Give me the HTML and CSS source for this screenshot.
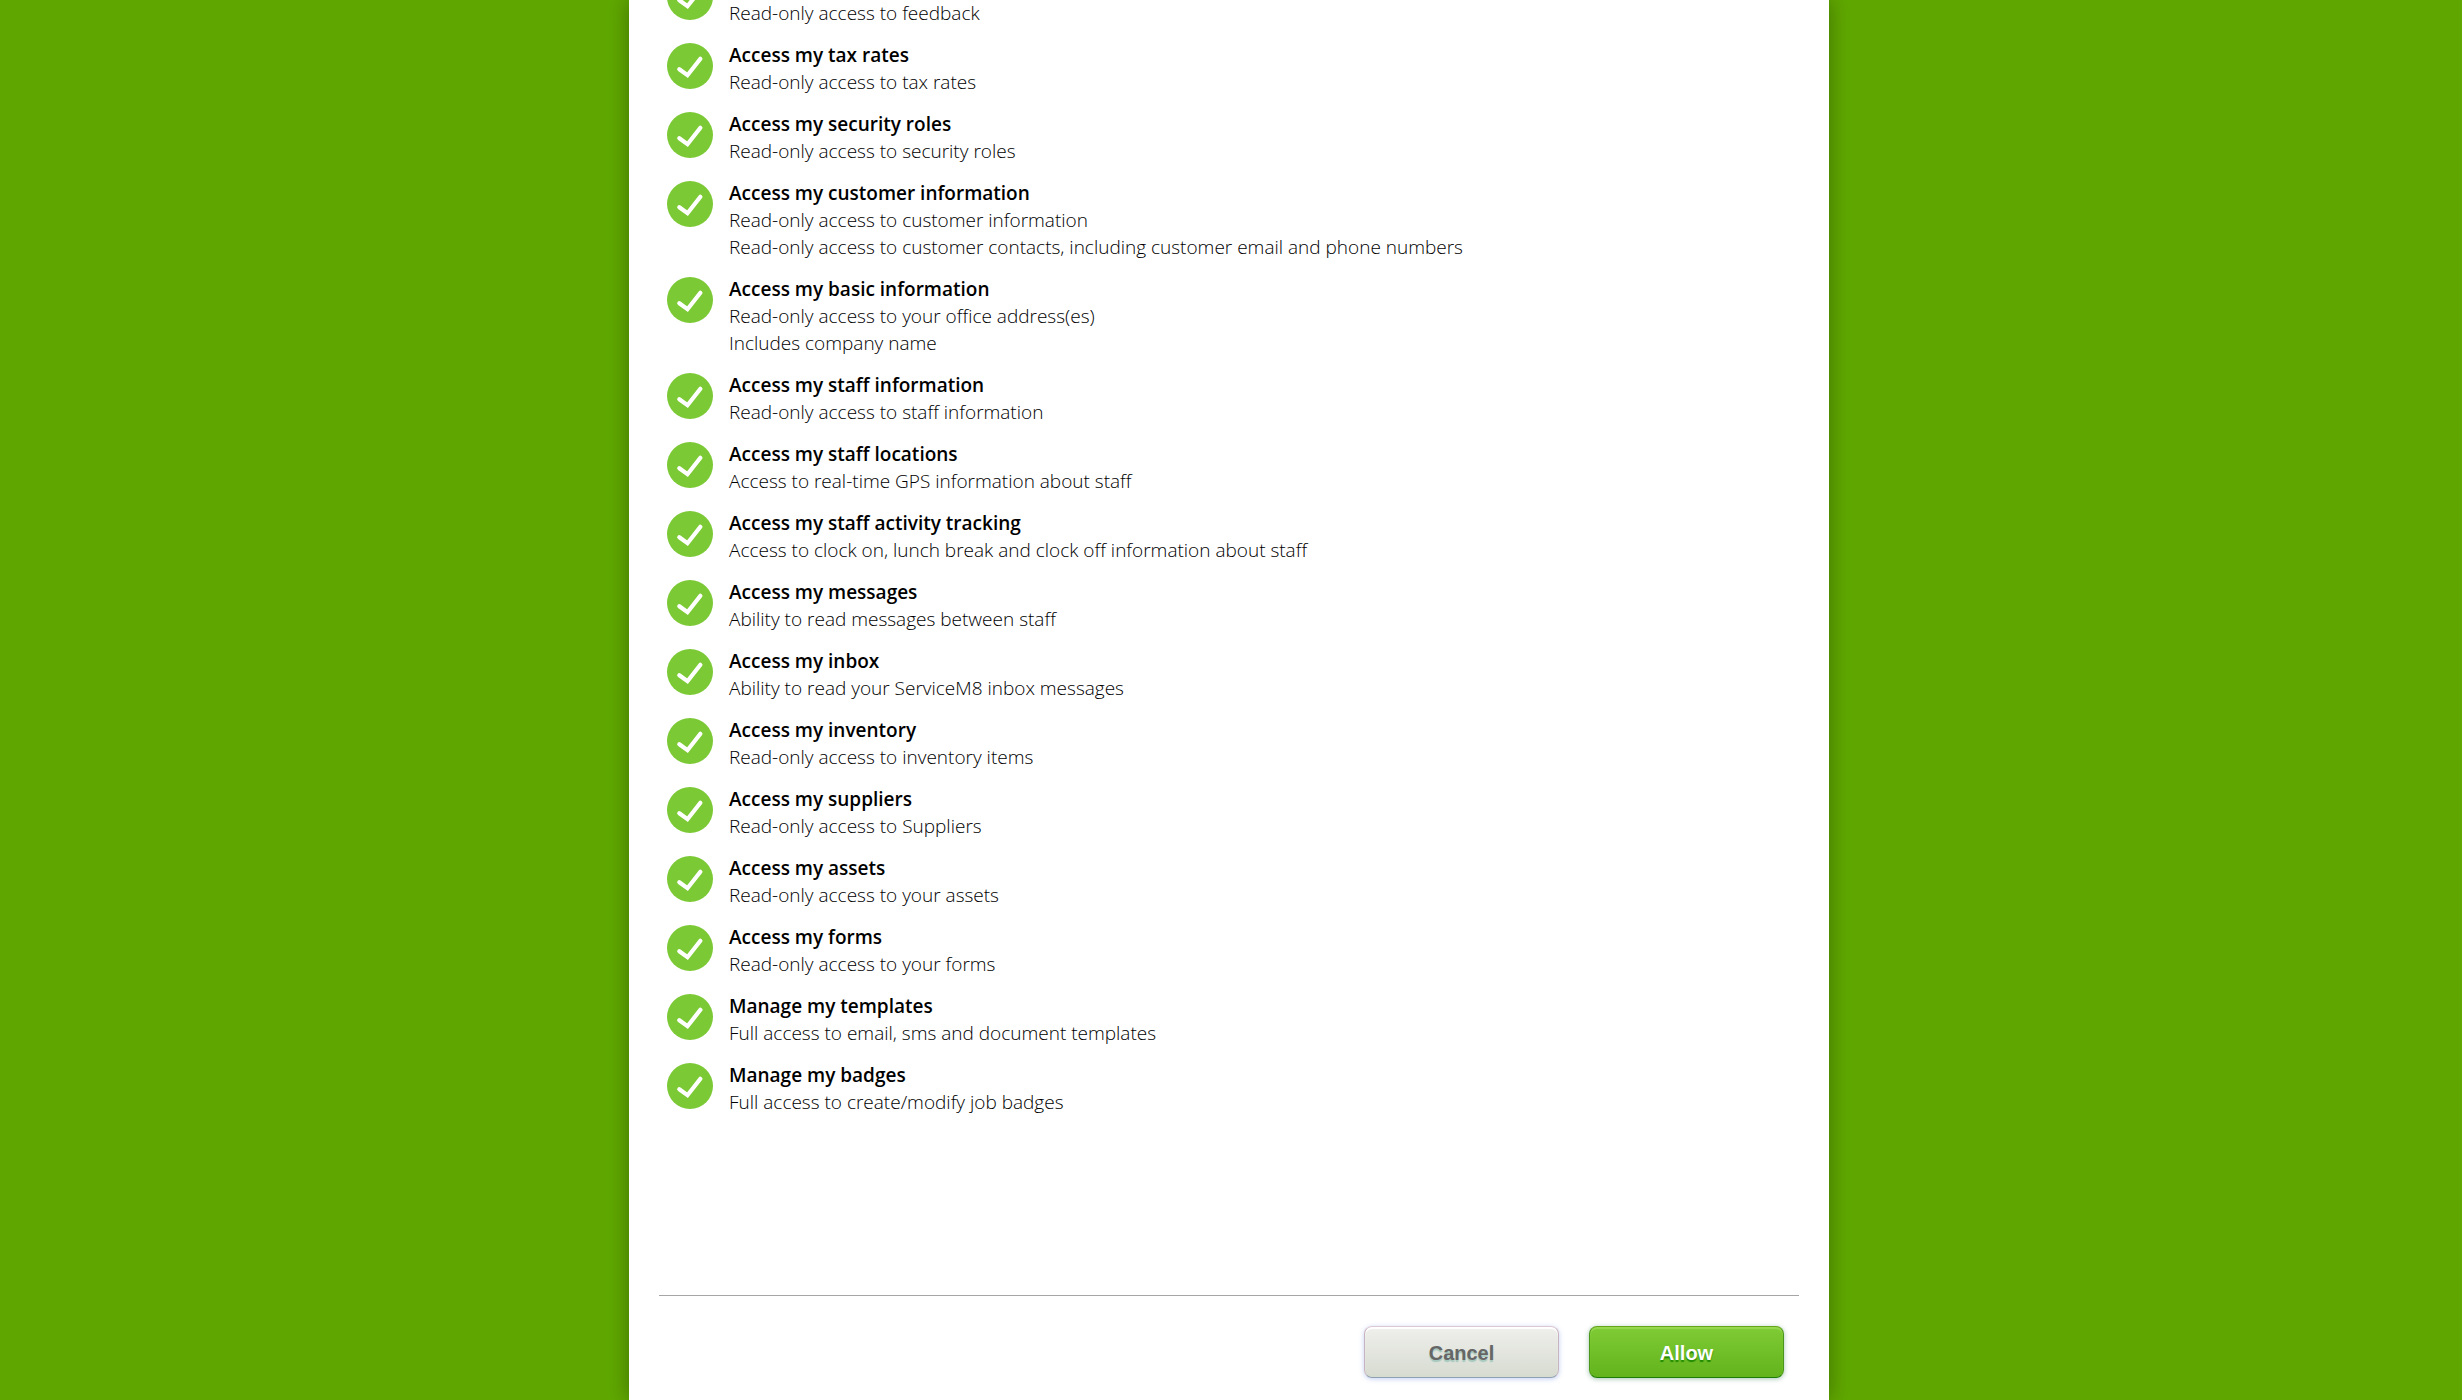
FILE: index.html
```html
<!DOCTYPE html>
<html lang="en">
<head>
<meta charset="utf-8">
<meta name="viewport" content="width=device-width, initial-scale=1">
<title>Authorise access</title>
<link rel="stylesheet" href="styles.css">
</head>
<body>
<svg class="sprite" aria-hidden="true">
  <symbol id="tick" viewBox="0 0 46 46">
    <circle cx="23" cy="23" r="23" fill="#7cc936"/>
    <path d="M12.300 26.200L20.500 32.200L33.400 15.800" fill="none" stroke="#fff" stroke-width="4.200" stroke-linecap="round" stroke-linejoin="miter"/>
  </symbol>
</svg>
<main class="panel">
  <ul class="scopes">
    <li class="scope scope-partial"><svg class="tick" aria-hidden="true"><use href="#tick"/></svg><div><p>Read-only access to feedback</p></div></li>
    <li class="scope"><svg class="tick" aria-hidden="true"><use href="#tick"/></svg><div><h2>Access my tax rates</h2><p>Read-only access to tax rates</p></div></li>
    <li class="scope"><svg class="tick" aria-hidden="true"><use href="#tick"/></svg><div><h2>Access my security roles</h2><p>Read-only access to security roles</p></div></li>
    <li class="scope"><svg class="tick" aria-hidden="true"><use href="#tick"/></svg><div><h2>Access my customer information</h2><p>Read-only access to customer information</p><p>Read-only access to customer contacts, including customer email and phone numbers</p></div></li>
    <li class="scope"><svg class="tick" aria-hidden="true"><use href="#tick"/></svg><div><h2>Access my basic information</h2><p>Read-only access to your office address(es)</p><p>Includes company name</p></div></li>
    <li class="scope"><svg class="tick" aria-hidden="true"><use href="#tick"/></svg><div><h2>Access my staff information</h2><p>Read-only access to staff information</p></div></li>
    <li class="scope"><svg class="tick" aria-hidden="true"><use href="#tick"/></svg><div><h2>Access my staff locations</h2><p>Access to real-time GPS information about staff</p></div></li>
    <li class="scope"><svg class="tick" aria-hidden="true"><use href="#tick"/></svg><div><h2>Access my staff activity tracking</h2><p>Access to clock on, lunch break and clock off information about staff</p></div></li>
    <li class="scope"><svg class="tick" aria-hidden="true"><use href="#tick"/></svg><div><h2>Access my messages</h2><p>Ability to read messages between staff</p></div></li>
    <li class="scope"><svg class="tick" aria-hidden="true"><use href="#tick"/></svg><div><h2>Access my inbox</h2><p>Ability to read your ServiceM8 inbox messages</p></div></li>
    <li class="scope"><svg class="tick" aria-hidden="true"><use href="#tick"/></svg><div><h2>Access my inventory</h2><p>Read-only access to inventory items</p></div></li>
    <li class="scope"><svg class="tick" aria-hidden="true"><use href="#tick"/></svg><div><h2>Access my suppliers</h2><p>Read-only access to Suppliers</p></div></li>
    <li class="scope"><svg class="tick" aria-hidden="true"><use href="#tick"/></svg><div><h2>Access my assets</h2><p>Read-only access to your assets</p></div></li>
    <li class="scope"><svg class="tick" aria-hidden="true"><use href="#tick"/></svg><div><h2>Access my forms</h2><p>Read-only access to your forms</p></div></li>
    <li class="scope"><svg class="tick" aria-hidden="true"><use href="#tick"/></svg><div><h2>Manage my templates</h2><p>Full access to email, sms and document templates</p></div></li>
    <li class="scope"><svg class="tick" aria-hidden="true"><use href="#tick"/></svg><div><h2>Manage my badges</h2><p>Full access to create/modify job badges</p></div></li>
  </ul>
  <form class="actions">
    <button class="btn btn-cancel" type="button">Cancel</button>
    <button class="btn btn-allow" type="submit">Allow</button>
  </form>
</main>
</body>
</html>
```
FILE: styles.css
```css
* { box-sizing: border-box; }

body {
  margin: 0;
  padding-right: 4px;
  min-height: 100vh;
  display: flex;
  justify-content: center;
  background: #5fa700;
  color: #000;
  font: 300 19px/27px "Open Sans", sans-serif;
  overflow-x: hidden;
}

.sprite { position: absolute; width: 0; height: 0; }

.panel {
  flex: 0 1 1200px;
  display: flex;
  flex-direction: column;
  padding: 0 30px 22px;
  background: #fff;
  box-shadow: 0 0 20px rgba(0, 0, 0, 0.32);
}

.scopes {
  list-style: none;
  margin: 0 0 30px;
  padding: 0 8px;
  display: grid;
  gap: 15px;
}

.scope { display: flex; align-items: flex-start; gap: 16px; }

.tick { flex: none; width: 46px; height: 46px; margin-top: 1px; }

/* The list starts part-way through its first entry. */
.scope-partial .tick { margin-top: -26px; }

.scope h2 { margin: 0; font-size: 19px; font-weight: 600; }

.scope p { margin: 0; }

.actions {
  display: flex;
  justify-content: flex-end;
  gap: 30px;
  margin-top: auto;
  padding: 30px 15px 0;
  border-top: 1px solid #a6a6a6;
}

.btn {
  width: 195px;
  height: 52px;
  padding: 1px 0 0;
  border: 1px solid;
  border-radius: 8px;
  font: bold 20px/24px "Liberation Sans", Arial, sans-serif;
}

.btn-cancel {
  color: #666;
  border-color: #dcc8d4 #c8b4c0 #8fa0b4;
  background: linear-gradient(#efefec, #d6dbd0);
  box-shadow: inset 0 2px 1px #fff, 0 1px 5px rgba(80, 120, 220, 0.35);
  text-shadow: 0 2px 1px #a4c8be;
}

.btn-allow {
  color: #fff;
  border-color: #66a41c #4a961a #1c7c08;
  background: linear-gradient(#7fcb35, #62b31c);
  box-shadow: inset 0 2px 1px #97d850, 0 1px 5px rgba(30, 110, 60, 0.4);
  text-shadow: 0 2px 1px #218a00;
}
```
